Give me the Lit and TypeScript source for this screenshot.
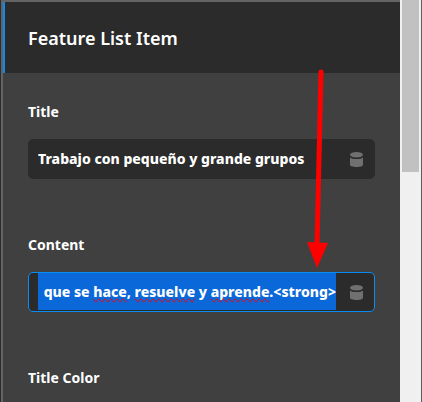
import { LitElement, html, css, svg } from "lit";
import { customElement } from "lit/decorators.js";

const databaseIcon = svg`
  <ellipse cx="6.5" cy="2.8" rx="6.5" ry="2.8"></ellipse>
  <path d="M0 5.4 C2.2 7.4 10.8 7.4 13 5.4 V12.8 C13 14.3 10 15 6.5 15 C3 15 0 14.3 0 12.8 Z"></path>
`;

@customElement("app-root")
export class AppRoot extends LitElement {
  static styles = css`
    :host {
      display: flex;
      position: relative;
      box-sizing: border-box;
      height: 100vh;
      overflow: hidden;
      border-left: 1px solid #2d2d2d;
      border-right: 1px solid #5e5e5e;
      background: #404040;
      color: #fff;
      font-family: "Segoe UI", "Noto Sans", "Open Sans", sans-serif;
    }
    .panel {
      flex: 1;
      min-width: 0;
      border-top: 2px solid #646464;
      border-left: 2px solid #646464;
    }
    .header {
      display: flex;
      align-items: center;
      height: 71px;
      padding-left: 23px;
      border-left: 2px solid #0a8cf5;
      background: #2b2b2b;
    }
    .heading {
      margin: 0;
      font-size: 18px;
      line-height: 28px;
      font-weight: 600;
    }
    .fields {
      display: flex;
      flex-direction: column;
      gap: 55px;
      padding: 28px 25px 0;
    }
    .field {
      display: flex;
      flex-direction: column;
      gap: 16px;
    }
    .label {
      font-size: 14px;
      line-height: 22px;
      font-weight: 700;
    }
    .box {
      display: flex;
      box-sizing: border-box;
      height: 40px;
      border: 1px solid #2b2b2b;
      border-radius: 5px;
      background: #2b2b2b;
    }
    .box.active {
      border-color: #0a8cf5;
    }
    .entry {
      position: relative;
      flex: 1;
      min-width: 0;
      margin: 0 0 1px 9px;
    }
    .input,
    .marks {
      display: block;
      box-sizing: border-box;
      width: 100%;
      height: 37px;
      margin: 0;
      padding: 0;
      border: 0;
      outline: 0;
      background: transparent;
      font: 800 14px/37px "Segoe UI", "Noto Sans", "Open Sans", sans-serif;
      color: #fff;
    }
    .active .input {
      background: #0a68d8;
      text-align: right;
    }
    .marks {
      position: absolute;
      inset: 0;
      color: transparent;
      text-align: right;
      white-space: pre;
      overflow: hidden;
      pointer-events: none;
    }
    .misspelt {
      text-decoration: underline wavy #e01030 1px;
      text-decoration: spelling-error;
    }
    .dynamic {
      display: flex;
      align-items: center;
      justify-content: center;
      width: 38px;
      padding: 0 0 0 2px;
      border: 0;
      background: transparent;
      fill: #707070;
    }
    .track {
      box-sizing: border-box;
      width: 21px;
      padding: 0 2px;
      background: #f0f0f0;
    }
    .thumb {
      height: 172px;
      background: #c1c1c1;
    }
    .arrow {
      position: absolute;
      left: 305px;
      top: 66px;
      pointer-events: none;
    }
  `;

  private dynamicButton(name: string) {
    return html`<button class="dynamic" type="button" aria-label="Dynamic content for ${name}">
      <svg width="13" height="15" viewBox="0 0 13 15" aria-hidden="true">${databaseIcon}</svg>
    </button>`;
  }

  render() {
    return html`
      <main class="panel">
        <header class="header"><h1 class="heading">Feature List Item</h1></header>
        <form class="fields">
          <div class="field">
            <label class="label" for="title">Title</label>
            <div class="box">
              <div class="entry">
                <input class="input" id="title" type="text" .value=${"Trabajo con pequeño y grande grupos"} />
              </div>
              ${this.dynamicButton("title")}
            </div>
          </div>
          <div class="field">
            <label class="label" for="content">Content</label>
            <div class="box active">
              <div class="entry">
                <input class="input" id="content" type="text" spellcheck="false"
                  .value=${"que se hace, resuelve y aprende.<strong>"} />
                <div class="marks" aria-hidden="true">que se <span class="misspelt">hace</span>, <span class="misspelt">resuelve</span> y <span class="misspelt">aprende</span>.&lt;strong&gt;</div>
              </div>
              ${this.dynamicButton("content")}
            </div>
          </div>
          <div class="field"><span class="label">Title Color</span></div>
        </form>
      </main>
      <div class="track"><div class="thumb"></div></div>
      <svg class="arrow" width="24" height="204" viewBox="0 0 24 204" aria-hidden="true">
        <path d="M15 6 L11 180" stroke="#f00" stroke-width="5" stroke-linecap="round"></path>
        <path d="M1 176 L22 177 L11 202 Z" fill="#f00"></path>
      </svg>
    `;
  }
}
